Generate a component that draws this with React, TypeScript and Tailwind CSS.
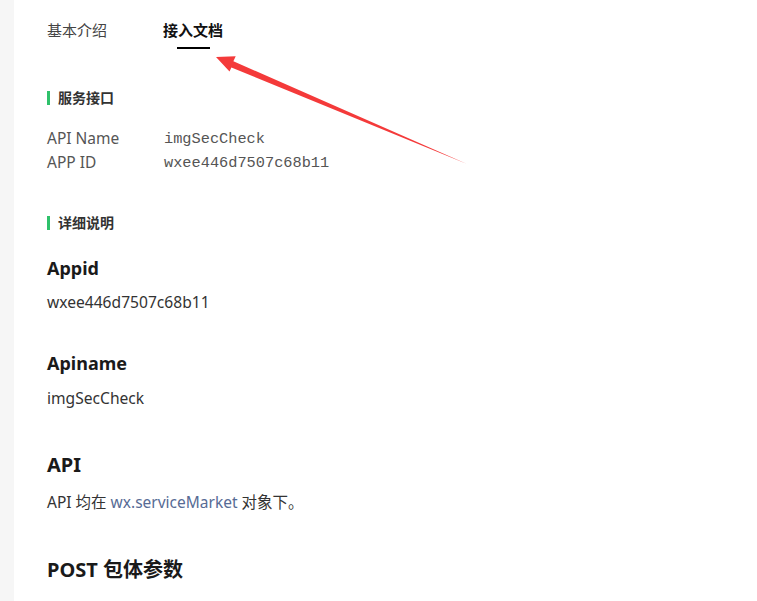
import React from "react";

const sans = { fontFamily: '"Noto Sans", "Noto Sans CJK SC", sans-serif' };
const mono = { fontFamily: '"Liberation Mono", monospace' };

function SectionTitle({ text, className }: { text: string; className?: string }) {
  return (
    <div className={`flex items-center h-[22px] ${className ?? ""}`}>
      <span className="w-[3px] h-[14px] bg-[#2fc16b] mr-[8px]" />
      <span className="text-[14px] leading-[22px] font-semibold text-[#333]">{text}</span>
    </div>
  );
}

export default function App() {
  return (
    <div className="relative flex w-[757px] h-[601px] bg-white overflow-hidden" style={sans}>
      <div className="w-[14px] shrink-0 bg-[#f6f6f6]" />
      <div className="flex-1 pl-[33px]">
        {/* Tabs */}
        <div className="flex pt-[19px]">
          <div className="text-[15px] leading-[22px] text-[#444] w-[116px]">基本介绍</div>
          <div className="flex flex-col items-center">
            <div className="text-[15px] leading-[22px] font-bold text-[#111]">接入文档</div>
            <div className="mt-[6px] w-[33px] h-[2px] bg-black" />
          </div>
        </div>

        <SectionTitle text="服务接口" className="mt-[38px]" />

        <div className="mt-[18px]">
          <div className="flex h-[24px] items-center">
            <span className="w-[117px] text-[15.5px] text-[#555]">API Name</span>
            <span className="text-[15.3px] text-[#555]" style={mono}>
              imgSecCheck
            </span>
          </div>
          <div className="flex h-[24px] items-center">
            <span className="w-[117px] text-[15.5px] text-[#555]">APP ID</span>
            <span className="text-[15.3px] text-[#555]" style={mono}>
              wxee446d7507c68b11
            </span>
          </div>
        </div>

        <SectionTitle text="详细说明" className="mt-[37px]" />

        <div className="mt-[21px] text-[18px] leading-[26px] font-bold text-[#1a1a1a]">Appid</div>
        <div className="mt-[9px] text-[15.6px] leading-[24px] text-[#333]">wxee446d7507c68b11</div>

        <div className="mt-[36px] text-[18px] leading-[26px] font-bold text-[#1a1a1a]">Apiname</div>
        <div className="mt-[10px] text-[15.6px] leading-[24px] text-[#333]">imgSecCheck</div>

        <div className="mt-[42px] text-[20px] leading-[26px] font-bold text-[#1a1a1a]">API</div>
        <div className="mt-[12px] text-[15.5px] leading-[24px] text-[#333]">
          API 均在 <span className="text-[#576b95]">wx.serviceMarket</span> 对象下。
        </div>

        <div className="mt-[42px] text-[20px] leading-[28px] font-bold text-[#1a1a1a]">POST 包体参数</div>
      </div>

      <svg
        className="absolute left-0 top-0 pointer-events-none"
        width="757"
        height="601"
        viewBox="0 0 757 601"
      >
        <polygon
          points="216,57 235.7,56.2 233.4,61.2 467,164 231.4,67.5 229.5,71.5"
          fill="#f43a3a"
        />
      </svg>
    </div>
  );
}
